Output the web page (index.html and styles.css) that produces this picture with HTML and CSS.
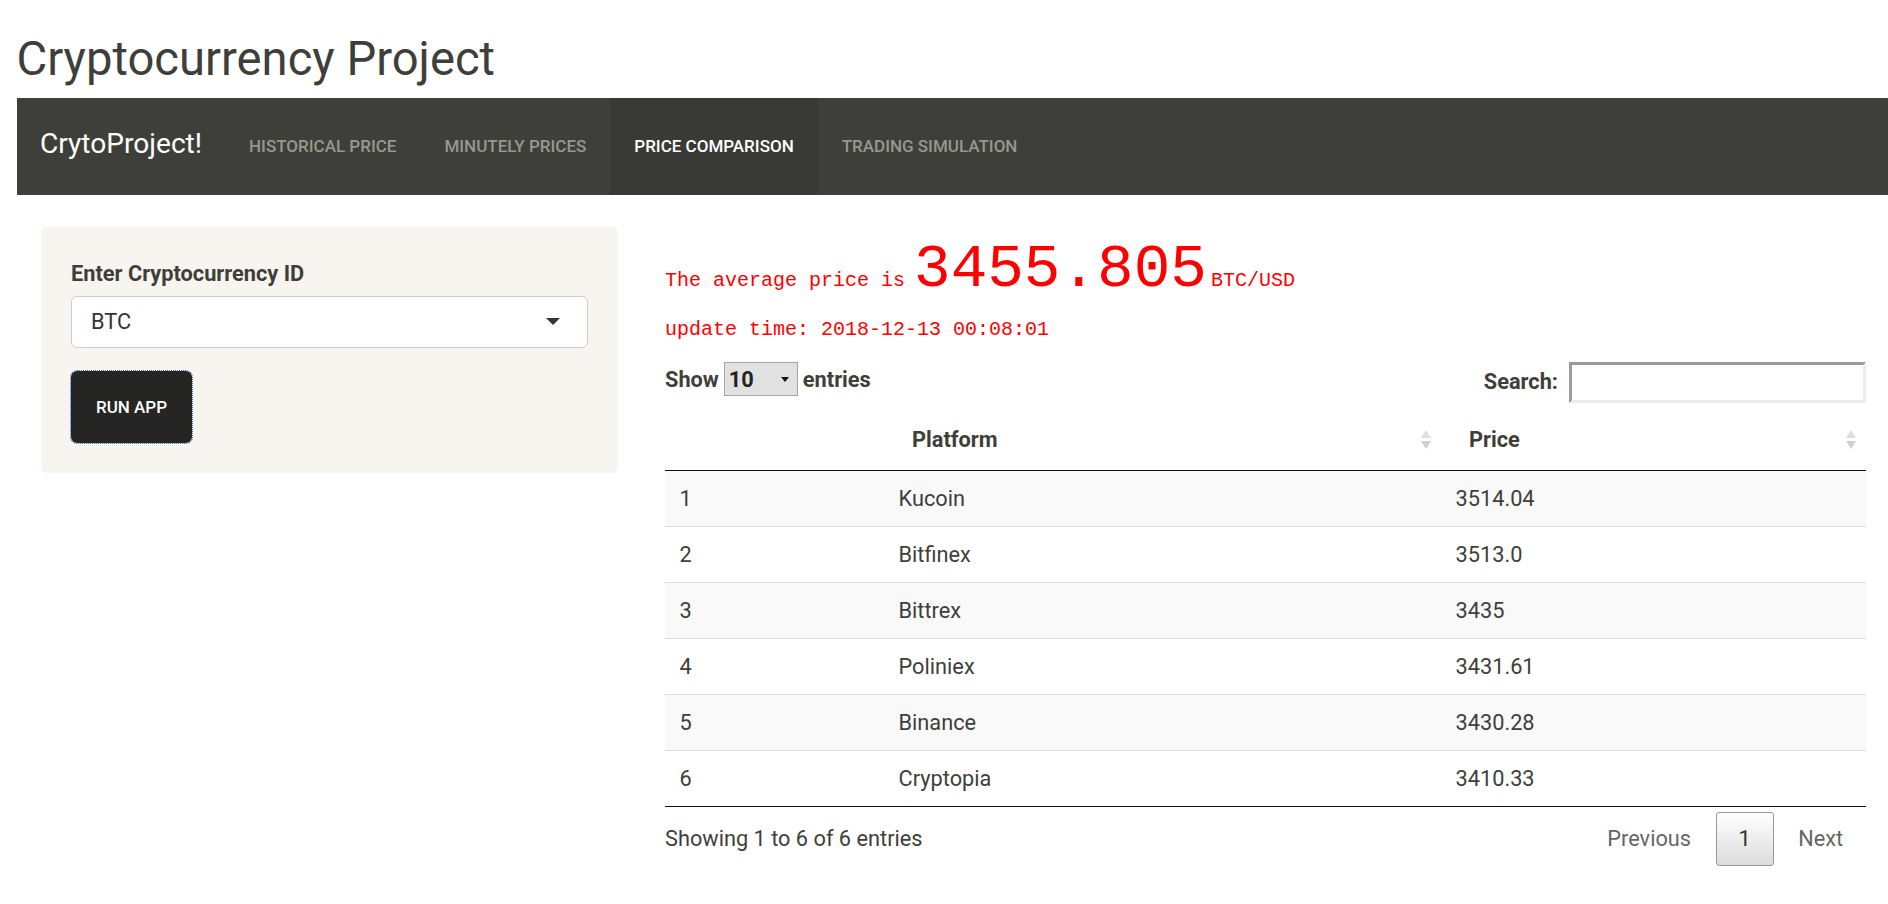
FILE: index.html
```html
<!DOCTYPE html>
<html lang="en">
<head>
<meta charset="utf-8">
<title>Cryptocurrency Project</title>
<link rel="stylesheet" href="styles.css">
</head>
<body>
<h1 class="title">Cryptocurrency Project</h1>
<nav class="navbar">
  <div class="brand">CrytoProject!</div>
  <ul class="nav">
    <li class="nav-item">HISTORICAL PRICE</li>
    <li class="nav-item">MINUTELY PRICES</li>
    <li class="nav-item active">PRICE COMPARISON</li>
    <li class="nav-item">TRADING SIMULATION</li>
  </ul>
</nav>
<div class="layout">
  <aside class="sidebar">
    <div class="well">
      <label class="field-label">Enter Cryptocurrency ID</label>
      <div class="select-box">
        <span class="select-value">BTC</span>
        <span class="caret"></span>
      </div>
      <button class="run-btn">RUN APP</button>
    </div>
  </aside>
  <main class="main">
    <div class="avg-line">The average price is <span class="big">3455.805</span>BTC/USD</div>
    <div class="update-line">update time: 2018-12-13 00:08:01</div>
    <div class="dt-top">
      <div class="dt-length">Show <span class="len-select">10<span class="len-caret"></span></span> entries</div>
      <div class="dt-filter"><span class="search-label">Search:</span> <span class="search-input"></span></div>
    </div>
    <table class="dt">
      <colgroup>
        <col class="c-idx">
        <col class="c-plat">
        <col class="c-price">
      </colgroup>
      <thead>
        <tr>
          <th></th>
          <th><div class="th-inner"><span>Platform</span><svg class="sort" width="12" height="23" viewBox="0 0 12 23"><polygon points="1,10 6,2 11,10" fill="#dedede"/><polygon points="1,13 6,21 11,13" fill="#d0d0d0"/></svg></div></th>
          <th><div class="th-inner"><span>Price</span><svg class="sort" width="12" height="23" viewBox="0 0 12 23"><polygon points="1,10 6,2 11,10" fill="#dedede"/><polygon points="1,13 6,21 11,13" fill="#d0d0d0"/></svg></div></th>
        </tr>
      </thead>
      <tbody>
        <tr class="odd"><td>1</td><td>Kucoin</td><td>3514.04</td></tr>
        <tr><td>2</td><td>Bitfinex</td><td>3513.0</td></tr>
        <tr class="odd"><td>3</td><td>Bittrex</td><td>3435</td></tr>
        <tr><td>4</td><td>Poliniex</td><td>3431.61</td></tr>
        <tr class="odd"><td>5</td><td>Binance</td><td>3430.28</td></tr>
        <tr><td>6</td><td>Cryptopia</td><td>3410.33</td></tr>
      </tbody>
    </table>
    <div class="dt-bottom">
      <div class="dt-info">Showing 1 to 6 of 6 entries</div>
      <div class="dt-paginate">
        <span class="pg-btn disabled">Previous</span>
        <span class="pg-btn current">1</span>
        <span class="pg-btn disabled">Next</span>
      </div>
    </div>
  </main>
</div>
</body>
</html>
```
FILE: styles.css
```css
* { box-sizing: border-box; }

html, body {
  margin: 0;
  padding: 0;
  background: #fff;
}

body {
  width: 1888px;
  overflow: hidden;
  font-family: Roboto, "Noto Sans", sans-serif;
  font-size: 21.75px;
  line-height: 31px;
  color: #3e3f3a;
}

.title {
  margin: 0 0 11.5px 0;
  padding: 31.5px 0 0 16.5px;
  font-size: 47.2px;
  line-height: 55px;
  font-weight: 400;
  color: #3e3f3a;
}

.navbar {
  margin-left: 16.5px;
  height: 97px;
  background: #3e3f3a;
  display: flex;
  align-items: stretch;
}

.brand {
  display: flex;
  align-items: center;
  padding: 0 23px 4px 23.5px;
  font-size: 28.1px;
  color: #fff;
  line-height: 1;
}

.nav {
  list-style: none;
  margin: 0;
  padding: 0;
  display: flex;
  align-items: stretch;
}

.nav-item {
  display: flex;
  align-items: center;
  padding: 0 24px;
  font-size: 17px;
  font-weight: 500;
  line-height: 1;
  color: #98978b;
  text-transform: uppercase;
}

.nav-item.active {
  background: #393a35;
  color: #fff;
}

.layout {
  display: flex;
  align-items: flex-start;
  gap: 47px;
  padding: 31.5px 22px 0 41px;
}

.sidebar {
  width: 577px;
  flex: none;
}

.well {
  background: #f8f5f0;
  border-radius: 6px;
  padding: 31.5px 30px 30px 30px;
  display: flex;
  flex-direction: column;
  align-items: flex-start;
}

.field-label {
  font-weight: 700;
  margin-bottom: 6.5px;
}

.select-box {
  width: 100%;
  height: 52px;
  background: #fff;
  border: 1px solid #cccccc;
  border-radius: 6px;
  display: flex;
  align-items: center;
  justify-content: space-between;
  padding: 0 27px 0 19px;
  color: #333;
}

.caret {
  width: 0;
  height: 0;
  border-left: 7px solid transparent;
  border-right: 7px solid transparent;
  border-top: 7px solid #333;
}

.run-btn {
  margin-top: 23px;
  width: 121px;
  height: 72px;
  background: #252523;
  color: #fff;
  border: none;
  border-radius: 6px;
  outline: 1px dotted #2a6fb8;
  outline-offset: 0;
  font-family: Roboto, sans-serif;
  font-size: 17px;
  font-weight: 500;
  text-transform: uppercase;
  padding: 0;
}

.main {
  flex: 1;
  min-width: 0;
  padding-top: 12px;
}

.avg-line {
  font-family: "Liberation Mono", "Courier New", monospace;
  color: #ff0000;
  font-size: 20px;
  line-height: 1;
}

.big {
  font-size: 61px;
  line-height: 1;
  margin-left: -3px;
  margin-right: 4px;
}

.update-line {
  margin-top: 20.5px;
  font-family: "Liberation Mono", "Courier New", monospace;
  color: #ff0000;
  font-size: 20px;
  line-height: 1;
}

.dt-top {
  margin-top: 21.5px;
  height: 41px;
  display: flex;
  justify-content: space-between;
  align-items: center;
  font-weight: 700;
}

.dt-length {
  display: flex;
  align-items: center;
  gap: 5px;
  padding-bottom: 6px;
}

.len-select {
  width: 74px;
  height: 34px;
  background: #e1e1e1;
  border: 1px solid #a6a6a6;
  display: inline-flex;
  align-items: center;
  justify-content: space-between;
  padding: 0 8px 0 4px;
  color: #222;
}

.len-caret {
  width: 0;
  height: 0;
  border-left: 4px solid transparent;
  border-right: 4px solid transparent;
  border-top: 5px solid #111;
}

.dt-filter {
  display: flex;
  align-items: center;
  gap: 11px;
}

.search-label {
  padding-bottom: 1px;
}

.search-input {
  display: block;
  width: 297px;
  height: 41px;
  background: #fff;
  border-top: 3px solid #9a9a9a;
  border-left: 3px solid #9a9a9a;
  border-right: 3px solid #ececec;
  border-bottom: 3px solid #ececec;
}

.dt {
  margin-top: 7px;
  width: 100%;
  border-collapse: collapse;
  table-layout: fixed;
  border-bottom: 1px solid #111;
}

.c-idx { width: 219px; }
.c-plat { width: 557px; }
.c-price { width: 425px; }

.dt th {
  text-align: left;
  font-weight: 700;
  padding: 14.5px 9px 14.5px 28px;
  border-bottom: 1px solid #111;
  line-height: 31px;
}

.th-inner {
  display: flex;
  justify-content: space-between;
  align-items: center;
}

.sort {
  display: block;
  flex: none;
}

.dt td {
  padding: 12px 14.5px;
  line-height: 31px;
  border-top: 1px solid #dddddd;
}

.dt tbody tr:first-child td {
  border-top: none;
}

.dt tr.odd td {
  background: #f9f9f9;
}

.dt-bottom {
  display: flex;
  justify-content: space-between;
  align-items: flex-start;
}

.dt-info {
  padding-top: 16px;
}

.dt-paginate {
  padding-top: 5px;
  display: flex;
  gap: 2px;
}

.pg-btn {
  display: block;
  padding: 10.9px 21.75px;
  border: 1px solid transparent;
  border-radius: 3px;
  line-height: 31px;
  color: #666;
}

.pg-btn.current {
  color: #333;
  border-color: #979797;
  background: linear-gradient(to bottom, #ffffff 0%, #dcdcdc 100%);
}
```
